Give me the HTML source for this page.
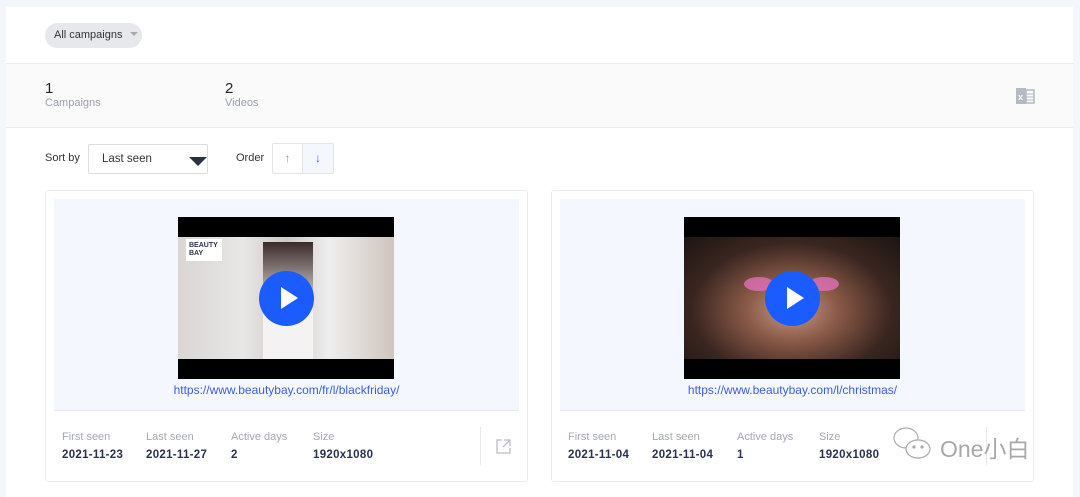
<!DOCTYPE html>
<html><head><style>
*{margin:0;padding:0;box-sizing:border-box}
body{width:1080px;height:493px;background:#f3f6fb;font-family:"Liberation Sans",sans-serif;position:relative;overflow:hidden;color:#2c3350}
.panel{position:absolute;left:6px;top:7px;width:1067px;height:490px;background:#fff}
.abs{position:absolute}
.pill{left:45px;top:23px;width:97px;height:25px;border-radius:13px;background:#e6e8ec;font-size:11px;color:#333;line-height:25px;padding-left:9px}
.stats{left:6px;top:63px;width:1067px;height:65px;background:#fafafa;border-top:1px solid #ebebeb;border-bottom:1px solid #ebebeb}
.num{font-size:15px;color:#222}
.lbl{font-size:11px;color:#9aa0aa}
.card{width:483px;height:292px;border:1px solid #ececec;border-radius:3px;background:#fff}
.prev{left:8px;top:8px;width:465px;height:212px;background:#f4f7fd;border-bottom:1px solid #e6e8ee}
.vid{left:124px;top:18px;width:216px;height:162px;background:#000;overflow:hidden}
.img{left:0;top:20px;width:216px;height:122px}
.play{left:81px;top:54px;width:55px;height:55px;border-radius:50%;background:#1a5cff}
.play:after{content:"";position:absolute;left:22px;top:16px;border-left:17px solid #fff;border-top:11px solid transparent;border-bottom:11px solid transparent}
.url{left:0;width:465px;top:184px;text-align:center;font-size:12px;color:#3b5cf0}
.fl{font-size:11px;color:#a3a8b6;top:240px}
.fv{font-size:11.5px;font-weight:bold;color:#2a3050;top:258px;letter-spacing:.3px}
</style></head><body>
<div class="panel"></div>
<div class="abs pill">All campaigns <span style="display:inline-block;border-left:4px solid transparent;border-right:4px solid transparent;border-top:4px solid #aaa;margin-left:4px;vertical-align:2px"></span></div>
<div class="abs stats">
 <div class="abs num" style="left:39px;top:16px">1</div><div class="abs lbl" style="left:39px;top:33px">Campaigns</div>
 <div class="abs num" style="left:219px;top:16px">2</div><div class="abs lbl" style="left:219px;top:33px">Videos</div>
 <svg class="abs" style="left:1010px;top:23px" width="19" height="18"><rect x="0" y="1" width="10" height="16" fill="#b4b9c2"/><rect x="10" y="3" width="8" height="13" fill="none" stroke="#b4b9c2" stroke-width="1.5"/><line x1="10" y1="7" x2="18" y2="7" stroke="#b4b9c2"/><line x1="10" y1="10" x2="18" y2="10" stroke="#b4b9c2"/><line x1="10" y1="13" x2="18" y2="13" stroke="#b4b9c2"/><text x="2" y="13" font-size="9" fill="#fff" font-family="Liberation Sans" font-weight="bold">x</text></svg>
</div>
<div class="abs" style="left:45px;top:152px;font-size:11px;color:#333">Sort by</div>
<div class="abs" style="left:88px;top:144px;width:120px;height:30px;border:1px solid #ddd;border-radius:2px;font-size:11.5px;color:#333;line-height:28px;padding-left:13px">Last seen<span style="position:absolute;right:0;top:12px;border-left:9px solid transparent;border-right:9px solid transparent;border-top:9px solid #2c3340"></span></div>
<div class="abs" style="left:236px;top:152px;font-size:11px;color:#333">Order</div>
<div class="abs" style="left:272px;top:143px;width:62px;height:31px;border:1px solid #e4e4e4;border-radius:2px"><div class="abs" style="left:0;top:0;width:30px;height:29px;border-right:1px solid #e4e4e4;text-align:center;line-height:29px;font-size:12px;color:#8a93a8">↑</div><div class="abs" style="left:30px;top:0;width:30px;height:29px;background:#f4f7fd;text-align:center;line-height:29px;font-size:12px;color:#3b5cf0">↓</div></div>

<div class="abs card" style="left:45px;top:190px">
 <div class="abs prev"><div class="abs vid"><div class="abs img" style="background:linear-gradient(90deg,#d9d6d4 0%,#e8e6e6 30%,#cfc9c6 50%,#eeeeee 70%,#cfc5be 100%)"><div class="abs" style="left:8px;top:2px;width:36px;height:22px;background:#fff;font-size:7px;font-weight:bold;line-height:8px;padding:3px">BEAUTY<br>BAY</div><div class="abs" style="left:85px;top:5px;width:50px;height:117px;background:linear-gradient(#3a2a28,#f4f2f2 60%)"></div></div><div class="abs play"></div></div>
 <div class="abs url">https://www.beautybay.com/fr/l/blackfriday/</div></div>
 <div class="abs fl" style="left:16px">First seen</div><div class="abs fv" style="left:16px">2021-11-23</div>
 <div class="abs fl" style="left:100px">Last seen</div><div class="abs fv" style="left:100px">2021-11-27</div>
 <div class="abs fl" style="left:185px">Active days</div><div class="abs fv" style="left:185px">2</div>
 <div class="abs fl" style="left:267px">Size</div><div class="abs fv" style="left:267px">1920x1080</div>
 <div class="abs" style="left:434px;top:236px;width:1px;height:38px;background:#e8e8e8"></div>
 <svg class="abs" style="left:450px;top:248px" width="15" height="15" fill="none" stroke="#b9bdc6" stroke-width="1.3"><path d="M6 1H1v13h13V9M8 1h6v6M14 1L7 8"/></svg>
</div>

<div class="abs card" style="left:551px;top:190px">
 <div class="abs prev"><div class="abs vid"><div class="abs img" style="background:radial-gradient(ellipse at 50% 60%,#c89a85 0%,#8a5a48 30%,#3a2620 65%,#1c1412 100%)"><div class="abs" style="left:60px;top:40px;width:30px;height:14px;background:#e070b8;border-radius:50%;opacity:.8"></div><div class="abs" style="left:125px;top:40px;width:30px;height:14px;background:#e070b8;border-radius:50%;opacity:.8"></div></div><div class="abs play"></div></div>
 <div class="abs url">https://www.beautybay.com/l/christmas/</div></div>
 <div class="abs fl" style="left:16px">First seen</div><div class="abs fv" style="left:16px">2021-11-04</div>
 <div class="abs fl" style="left:100px">Last seen</div><div class="abs fv" style="left:100px">2021-11-04</div>
 <div class="abs fl" style="left:185px">Active days</div><div class="abs fv" style="left:185px">1</div>
 <div class="abs fl" style="left:267px">Size</div><div class="abs fv" style="left:267px">1920x1080</div>
 <div class="abs" style="left:434px;top:236px;width:1px;height:38px;background:#e8e8e8"></div>
</div>
<svg class="abs" style="left:890px;top:425px" width="50" height="40" fill="#fff" stroke="#aaa" stroke-width="1.2"><ellipse cx="16" cy="13" rx="12" ry="10"/><ellipse cx="28" cy="24" rx="12" ry="9"/><circle cx="24" cy="22" r="1" fill="#aaa"/><circle cx="32" cy="22" r="1" fill="#aaa"/></svg>
<div class="abs" style="left:940px;top:430px;font-size:23px;color:#a8a8a8;font-family:'Liberation Sans','Noto Sans CJK SC',sans-serif">One小白</div>
</body></html>
